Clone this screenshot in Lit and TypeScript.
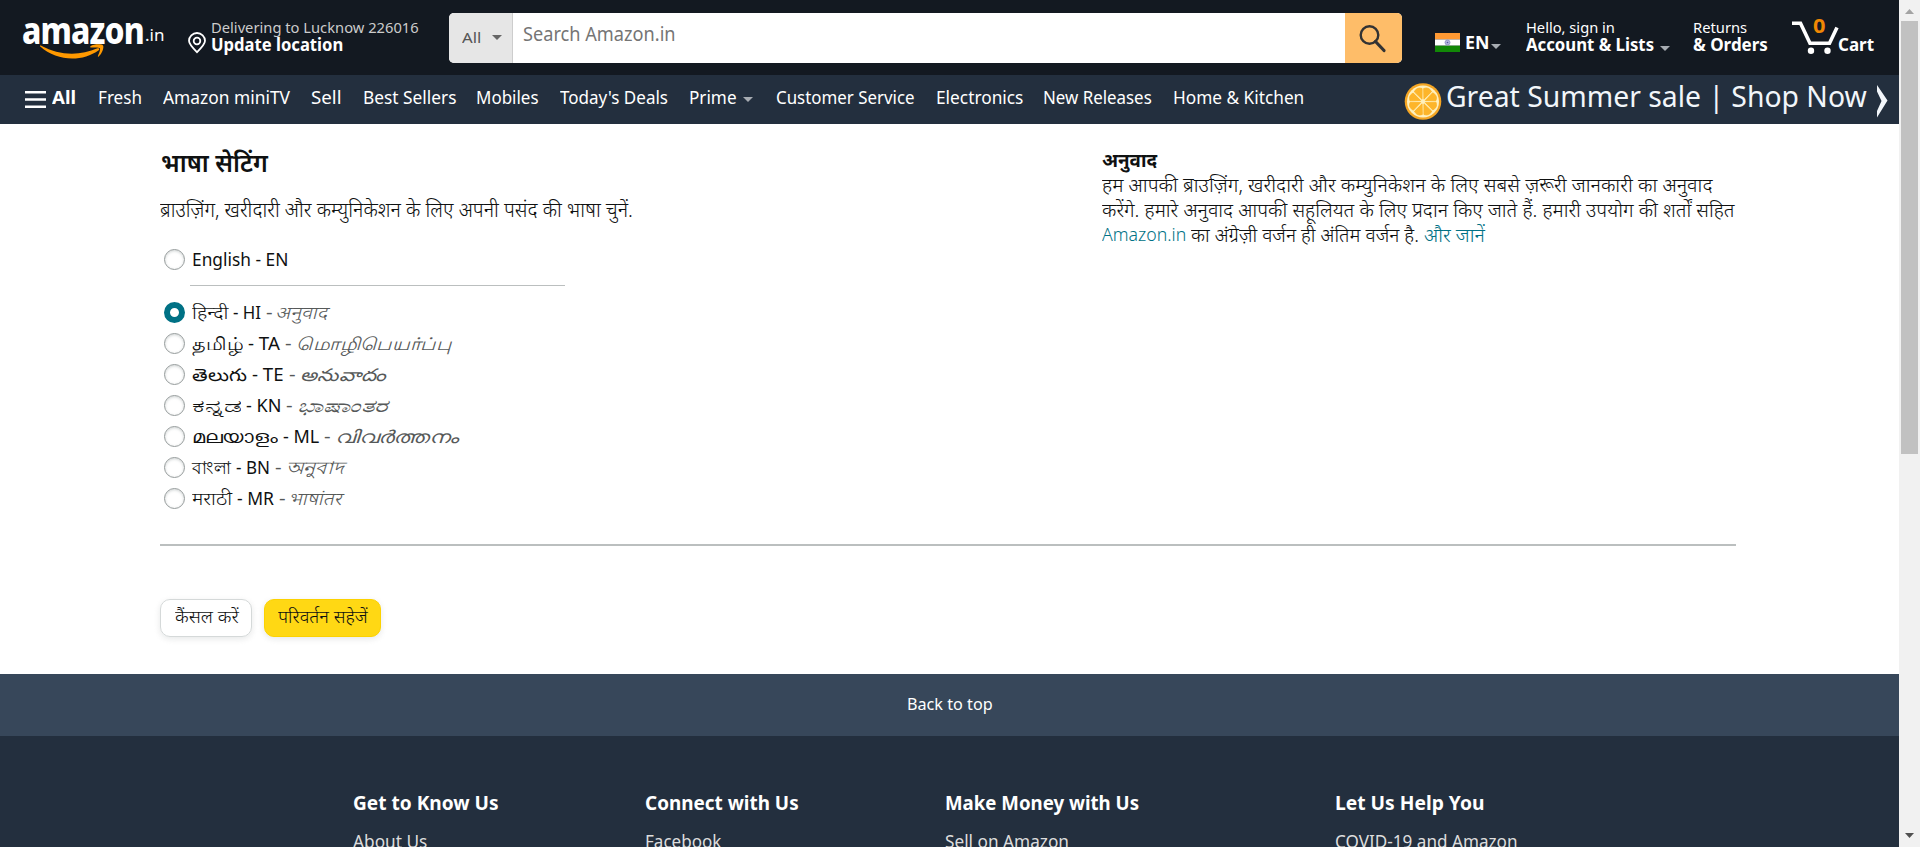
import { LitElement, html, css, svg } from "lit";
import { customElement, property, state } from "lit/decorators.js";
import { classMap } from "lit/directives/class-map.js";
import { styleMap } from "lit/directives/style-map.js";

/** A single-line label condensed or expanded to a given measure, optionally slanted. */
@customElement("fit-text")
class FitText extends LitElement {
  @property({ type: Number }) w = 0;
  @property({ type: Number }) slant = 0;
  @state() ratio = 1;
  static styles = css`
    :host { display: block; flex: none; white-space: nowrap; }
    .box { display: block; }
    .ink { display: inline-block; transform-origin: 0 50%; vertical-align: top; }
  `;
  firstUpdated() {
    const ink = this.renderRoot.querySelector(".ink") as HTMLElement;
    const natural = ink.offsetWidth;
    if (natural > 0 && this.w > 0) this.ratio = this.w / natural;
  }
  render() {
    const skew = this.slant ? ` skewX(${-this.slant}deg)` : "";
    return html`<span class="box" style=${styleMap({ width: this.w + "px" })}
      ><span class="ink" style=${styleMap({ transform: `scaleX(${this.ratio})${skew}` })}><slot></slot></span></span>`;
  }
}

const NAV: [string, number, boolean?][] = [
  ["Fresh", 44], ["Amazon miniTV", 127], ["Sell", 31], ["Best Sellers", 93],
  ["Mobiles", 63], ["Today's Deals", 108], ["Prime", 48, true], ["Customer Service", 139],
  ["Electronics", 87], ["New Releases", 109], ["Home & Kitchen", 131],
];

interface Lang { name: string; nw: number; code: string; cw: number; note: string; tw: number; slant?: number; }
const LANGS: Lang[] = [
  { name: "हिन्दी", nw: 36, code: "- HI", cw: 28, note: "अनुवाद", tw: 52, slant: 12 },
  { name: "தமிழ்", nw: 51, code: "- TA", cw: 32, note: "மொழிபெயர்ப்பு", tw: 155 },
  { name: "తెలుగు", nw: 55, code: "- TE", cw: 32, note: "అనువాదం", tw: 86 },
  { name: "ಕನ್ನಡ", nw: 49, code: "- KN", cw: 35, note: "ಭಾಷಾಂತರ", tw: 90 },
  { name: "മലയാളം", nw: 86, code: "- ML", cw: 36, note: "വിവർത്തനം", tw: 123 },
  { name: "বাংলা", nw: 39, code: "- BN", cw: 34, note: "অনুবাদ", tw: 57 },
  { name: "मराठी", nw: 40, code: "- MR", cw: 37, note: "भाषांतर", tw: 53, slant: 12 },
];

const FOOT: [string, number, string, number][] = [
  ["Get to Know Us", 146, "About Us", 74],
  ["Connect with Us", 154, "Facebook", 76],
  ["Make Money with Us", 194, "Sell on Amazon", 124],
  ["Let Us Help You", 149, "COVID-19 and Amazon", 183],
];

const caret = (cls: string) => html`<svg class="caret ${cls}" width="10" height="5" viewBox="0 0 10 5"><path d="M0 0h10L5 5z" fill="currentColor"/></svg>`;

@customElement("app-root")
class AppRoot extends LitElement {
  @state() lang = "- HI";

  static styles = css`
    :host { display: block; height: 847px; overflow: hidden; background: #fff; color: #0f1111;
      font: 17.5px/25px "Noto Sans", "Noto Sans Devanagari", "Open Sans", "DejaVu Sans", sans-serif; }
    * { box-sizing: border-box; }
    svg { display: block; flex: none; }
    .window { display: flex; height: 847px; }
    .page { width: 1899px; height: 847px; overflow: hidden; display: flex; flex-direction: column; }
    .b { font-weight: 700; }
    .light { font-weight: 300; }
    .top { height: 75px; flex: none; background: #131921; color: #fff; display: flex; align-items: flex-start; }
    .logo { width: 164px; margin-left: 22px; height: 75px; flex: none; display: flex; position: relative; }
    .word { font-size: 37.5px; line-height: 40px; font-weight: 800; margin-top: 9.5px; letter-spacing: -1px; }
    .tld { font-size: 17px; line-height: 20px; margin: 25px 0 0 1px; }
    .smile { position: absolute; left: 17px; top: 43px; }
    .pin { margin: 32px 5px 0 2px; }
    .two { display: flex; flex-direction: column; padding-top: 17.5px; }
    .small { font-size: 15px; line-height: 18px; }
    .bold { font-size: 17px; font-weight: 700; line-height: 18px; }
    .dim { color: #ccc; }
    .deliver { width: 238px; }
    .search { width: 953px; height: 50px; margin-top: 13px; border-radius: 5px; overflow: hidden; display: flex; background: #fff; flex: none; }
    .scope { width: 64px; background: #e6e6e6; border-right: 1px solid #cdcdcd; color: #555; display: flex; padding: 12px 0 0 13px; font-size: 15px; }
    .scope .caret { margin: 10px 0 0 11px; color: #666; }
    .query { flex: 1; color: #757575; font-size: 19px; padding: 9px 0 0 10px; }
    .go { width: 57px; background: #febd69; padding: 11px 0 0 13px; }
    .flag { margin: 33px 5px 0 33px; }
    .en { font-size: 17px; font-weight: 700; margin-top: 30px; }
    .en-caret { margin: 44px 25px 0 2px; color: #a7acb2; }
    .line { display: flex; }
    .acct-caret { margin: 10px 0 0 6px; color: #a7acb2; }
    .account { width: 167px; }
    .returns { width: 99px; }
    .cart { position: relative; width: 47px; margin-top: 20px; flex: none; }
    .count { position: absolute; left: 21px; top: -7px; color: #f08804; font-weight: 700; font-size: 20px; line-height: 25px; }
    .cart-label { font-size: 17px; font-weight: 700; margin: 32px 0 0 -1px; }
    .nav { height: 49px; flex: none; background: #232f3e; color: #fff; display: flex; align-items: flex-start; padding-left: 25px; font-size: 17.5px; }
    .menu { margin: 16px 6px 0 0; }
    .items { display: flex; gap: 20.8px; margin: 10px 0 0 0; }
    .all { margin-right: 1px; }
    .item { display: flex; }
    .nav-caret { margin: 12px 2px 0 6px; color: #a7acb2; }
    .promo { display: flex; margin: 8px 0 0 auto; padding-right: 11px; }
    .promo-text { font-size: 29px; line-height: 36px; margin: -5px 9px 0 4px; color: #f2f6fa; }
    .chev { margin-top: 2px; }
    .main { height: 550px; flex: none; padding: 20px 0 0 160px; width: 1736px; }
    .cols { display: flex; justify-content: space-between; height: 400px; }
    .left { width: 480px; }
    .right { width: 634px; padding-top: 3px; }
    h1 { font-size: 26px; line-height: 36px; margin: 0 0 0 1px; font-weight: 600; }
    .lead { font-size: 20px; margin-top: 17px; }
    .opt { display: flex; align-items: center; height: 31px; padding-left: 4px; cursor: pointer; }
    .opt.first { margin-top: 22px; }
    .radio { width: 21px; height: 21px; border-radius: 50%; border: 1.5px solid #959b9b; margin-right: 7px; background: #fff; box-shadow: inset 0 1px 3px #d0d4d4; flex: none; }
    .radio.on { border: 6.5px solid #007185; box-shadow: none; }
    .opt-text { display: flex; gap: 5px; }
    .note { color: #565959; font-style: italic; font-weight: 300; margin-left: -1px; }
    .upright { font-style: normal; }
    .dash { color: #565959; }
    .sep { margin: 10px 0 11px 30px; width: 375px; height: 1px; background: #bbbfbf; }
    .copy { font-size: 19.5px; }
    .mixed { display: flex; }
    .latin { font-size: 17.5px; }
    .a { color: #007185; }
    .rule { height: 2px; background: #bbbfbf; }
    .buttons { display: flex; gap: 12px; margin-top: 53px; }
    .btn { height: 38px; border-radius: 10px; padding: 4px 0 0 14px; border: 1px solid #d5d9d9; box-shadow: 0 2px 6px rgba(213,217,217,.6); font-size: 18px; }
    .cancel { width: 92px; }
    .save { width: 117px; padding-left: 13px; background: #ffd814; border-color: #fcd200; }
    .back { height: 62px; flex: none; background: #37475a; color: #fff; display: flex; justify-content: center; padding-top: 18px; font-size: 16px; }
    .foot { flex: 1; background: #232f3e; color: #fff; display: grid; grid-template-columns: 292px 300px 390px 1fr; padding: 53px 0 0 353px; }
    .foot-h { font-size: 20px; font-weight: 700; line-height: 28px; }
    .foot-l { color: #ddd; font-size: 17.5px; margin-top: 12px; }
    .bar { width: 21px; background: #f1f1f1; display: flex; flex-direction: column; align-items: center; }
    .thumb { width: 17px; height: 433px; background: #c1c1c1; margin-bottom: auto; }
  `;

  option(l: Lang) {
    const on = this.lang === l.code;
    return html`<div class="opt" @click=${() => (this.lang = l.code)}>
      <div class=${classMap({ radio: true, on })}></div>
      <div class="opt-text">
        <fit-text class=${l.slant ? "light" : ""} w=${l.nw}>${l.name}</fit-text><fit-text w=${l.cw}>${l.code}</fit-text>
        <fit-text class="dash" w="7">-</fit-text><fit-text class=${classMap({ note: true, upright: !!l.slant })} slant=${l.slant ?? 0} w=${l.tw}>${l.note}</fit-text>
      </div></div>`;
  }

  render() {
    const slices = Array.from({ length: 8 }, (_, i) => i * 45 + 22);
    return html`<div class="window"><div class="page">
      <header class="top">
        <div class="logo">
          <fit-text class="word" w="122">amazon</fit-text><fit-text class="tld" w="19">.in</fit-text>
          <svg class="smile" width="68" height="18" viewBox="0 0 68 18" fill="#ff9900">
            <path d="M1 3.2C.8 2.6 1.6 2.400 2.300 2.800C20 12.600 41 13 58.500 5.300C60 4.700 61 6.300 59.700 7.200C43 19.200 18 18.500 1 3.200z"/>
            <path d="M51.500 3.300C54.500 1 62.500.8 64 2.400C65.300 4 63 10.800 59.700 13.400C58.900 14 58.600 13.500 59 12.700C60.300 9.800 61.600 6.300 60.900 5.300C60.200 4.300 56.300 4.400 52.300 4.600C51.300 4.600 50.800 3.900 51.500 3.300z"/>
          </svg>
        </div>
        <svg class="pin" width="18" height="22" viewBox="0 0 18 22" fill="none" stroke="#fff" stroke-width="1.8"><path d="M9 20.200C5 16.200 1 12.300 1 8.800a8 7.800 0 0 1 16 0c0 3.500-4 7.400-8 11.400z"/><circle cx="9" cy="9" r="3.300"/></svg>
        <div class="two deliver"><fit-text class="small dim" w="208">Delivering to Lucknow 226016</fit-text><fit-text class="bold" w="132">Update location</fit-text></div>
        <div class="search">
          <div class="scope"><fit-text w="19">All</fit-text>${caret("")}</div>
          <div class="query"><fit-text w="153">Search Amazon.in</fit-text></div>
          <div class="go"><svg width="30" height="30" viewBox="0 0 30 30" fill="none" stroke="#333" stroke-width="2.400"><circle cx="11.500" cy="11" r="8.800"/><path d="M17.500 17.500l8.500 9" stroke-width="3.200" stroke-linecap="round"/></svg></div>
        </div>
        <svg class="flag" width="25" height="19" viewBox="0 0 25 19"><path fill="#ff9933" d="M0 0h25v6.400H0z"/><path fill="#fff" d="M0 6.400h25v6.300H0z"/><path fill="#128807" d="M0 12.700h25V19H0z"/><circle cx="12.500" cy="9.500" r="2.500" fill="#b5b5dc" stroke="#8a8ac4" stroke-width=".8"/><circle cx="12.500" cy="9.500" r=".8" fill="#5555a5"/></svg>
        <fit-text class="en" w="24">EN</fit-text>${caret("en-caret")}
        <div class="two account"><fit-text class="small" w="89">Hello, sign in</fit-text>
          <div class="line"><fit-text class="bold" w="128">Account &amp; Lists</fit-text>${caret("acct-caret")}</div></div>
        <div class="two returns"><fit-text class="small" w="54">Returns</fit-text><fit-text class="bold" w="75">&amp; Orders</fit-text></div>
        <div class="cart"><svg width="47" height="35" viewBox="0 0 47 35"><path d="M0 3.200h8.500l9.500 20h19.500L45 7.500" fill="none" stroke="#fff" stroke-width="3.600"/><circle cx="19" cy="30.800" r="3.200" fill="#fff"/><circle cx="35.500" cy="30.800" r="3.200" fill="#fff"/></svg><fit-text class="count" w="12">0</fit-text></div>
        <fit-text class="cart-label" w="36">Cart</fit-text>
      </header>
      <nav class="nav">
        <svg class="menu" width="21" height="17" viewBox="0 0 21 17" fill="#fff"><path d="M0 0h21v2.500H0zM0 7.200h21v2.500H0zM0 14.500h21V17H0z"/></svg>
        <div class="items"><fit-text class="b all" w="24.500">All</fit-text>
          ${NAV.map(([t, w, c]) => html`<div class="item"><fit-text w=${w}>${t}</fit-text>${c ? caret("nav-caret") : ""}</div>`)}
        </div>
        <div class="promo">
          <svg width="38" height="37" viewBox="-19 -18.500 38 37"><circle r="18.300" fill="#f5a623"/><circle r="16" fill="#fff0bd"/>
            ${slices.map((a) => svg`<path d="M0 -2.500L-4.200 -12.300Q0 -16 4.200 -12.300Z" fill="#fdb52a" stroke="#fdb52a" stroke-width=".8" stroke-linejoin="round" transform="rotate(${a})"/>`)}
          </svg>
          <fit-text class="promo-text" w="421">Great Summer sale | Shop Now</fit-text>
          <svg class="chev" width="12" height="33" viewBox="0 0 12 33"><path d="M1 0L11.500 15.500L1 32.500V26L5.500 16L1 6.500z" fill="#f2f6fa"/></svg>
        </div>
      </nav>
      <main class="main">
        <div class="cols">
          <section class="left">
            <h1><fit-text w="107">भाषा सेटिंग</fit-text></h1>
            <fit-text class="lead light" w="473">ब्राउज़िंग, खरीदारी और कम्युनिकेशन के लिए अपनी पसंद की भाषा चुनें.</fit-text>
            <div class="opt first" @click=${() => (this.lang = "EN")}><div class=${classMap({ radio: true, on: this.lang === "EN" })}></div><fit-text w="96">English - EN</fit-text></div>
            <div class="sep"></div>
            ${LANGS.map((l) => this.option(l))}
          </section>
          <section class="right copy">
            <fit-text class="b" w="55">अनुवाद</fit-text>
            <fit-text class="light" w="611">हम आपकी ब्राउज़िंग, खरीदारी और कम्युनिकेशन के लिए सबसे ज़रूरी जानकारी का अनुवाद</fit-text>
            <fit-text class="light" w="633">करेंगे. हमारे अनुवाद आपकी सहूलियत के लिए प्रदान किए जाते हैं. हमारी उपयोग की शर्तों सहित</fit-text>
            <div class="mixed light"><fit-text class="a latin" w="89">Amazon.in&nbsp;</fit-text><fit-text w="233">का अंग्रेज़ी वर्जन ही अंतिम वर्जन है.&nbsp;</fit-text><fit-text class="a" w="61">और जानें</fit-text></div>
          </section>
        </div>
        <div class="rule"></div>
        <div class="buttons light">
          <div class="btn cancel"><fit-text w="64">कैंसल करें</fit-text></div>
          <div class="btn save"><fit-text w="90">परिवर्तन सहेजें</fit-text></div>
        </div>
      </main>
      <div class="back"><fit-text w="86">Back to top</fit-text></div>
      <footer class="foot">
        ${FOOT.map(([h, hw, l, lw]) => html`<div><fit-text class="foot-h" w=${hw}>${h}</fit-text><fit-text class="foot-l" w=${lw}>${l}</fit-text></div>`)}
      </footer>
    </div>
    <div class="bar">
      <svg width="21" height="21" viewBox="0 0 21 21"><path d="M6 14h9l-4.500-5z" fill="#a3a3a3"/></svg>
      <div class="thumb"></div>
      <svg width="21" height="21" viewBox="0 0 21 21"><path d="M6 7h9l-4.500 5z" fill="#505050"/></svg>
    </div></div>`;
  }
}
